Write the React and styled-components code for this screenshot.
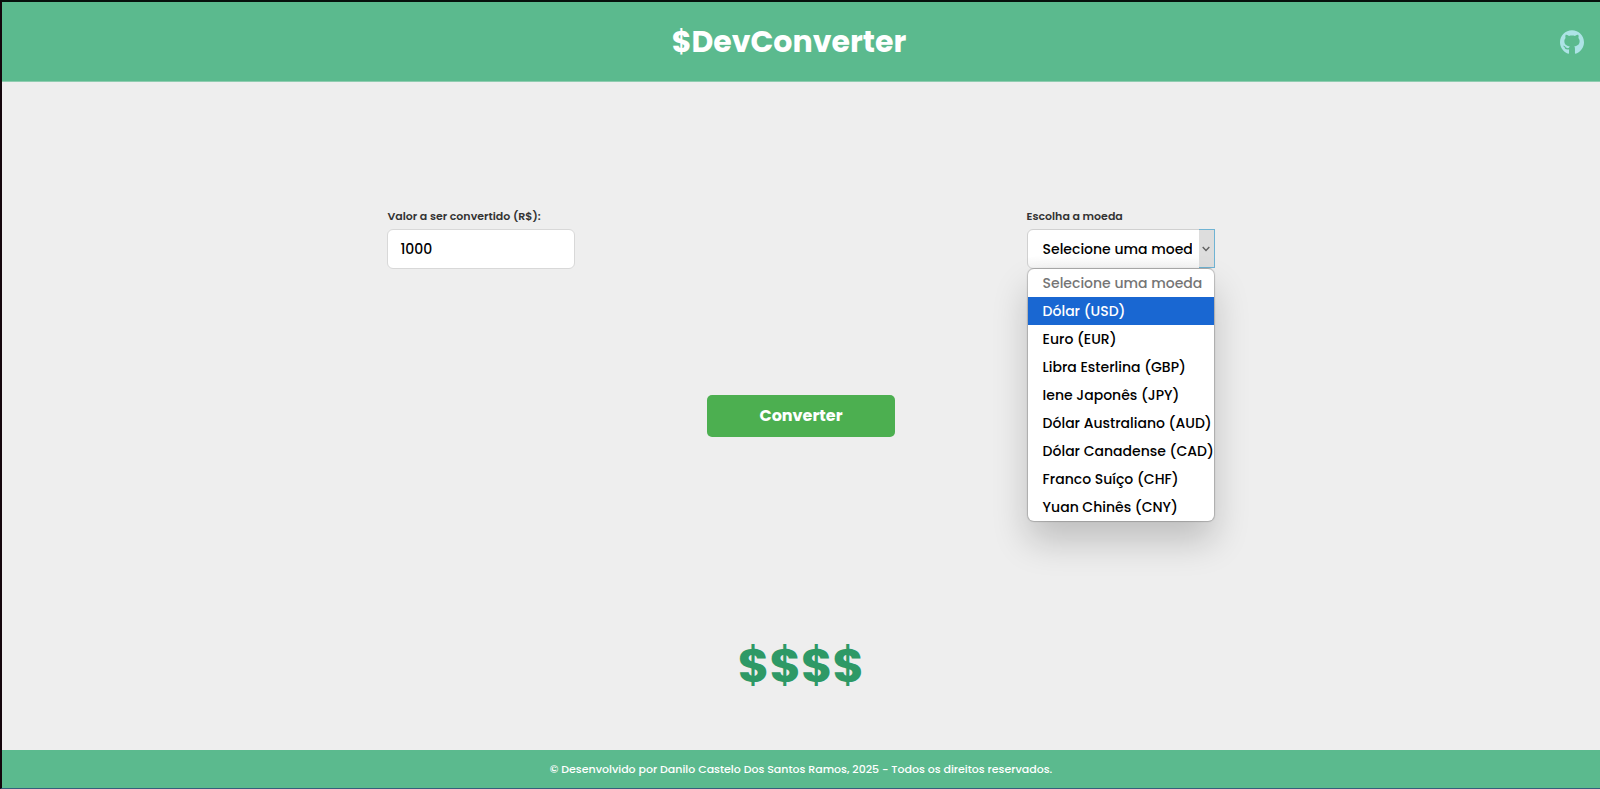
import React, { useState } from "react";
import styled, { createGlobalStyle } from "styled-components";

const GlobalStyle = createGlobalStyle`
  * { box-sizing: border-box; margin: 0; padding: 0; }
  body { background: #eeeeee; font-family: Poppins, Inter, "Open Sans", sans-serif; }
`;

const Page = styled.div`
  min-height: 100vh;
  display: flex;
  flex-direction: column;
  border-top: 2px solid #07110c;
  border-left: 2px solid #14060c;
  border-bottom: 1px solid #35607c;
`;

const Header = styled.header`
  display: flex;
  align-items: center;
  height: 80px;
  padding: 0 16px;
  border-bottom: 1px solid #8fccb0;
  background: #5bba8e;
`;

const Title = styled.h1`
  flex: 1;
  text-align: center;
  color: #fff;
  font-size: 30px;
  line-height: 48px;
  font-weight: 700;
`;

const RepoLink = styled.a`
  display: flex;
  color: #ade3e6;
`;

const Main = styled.main`
  flex: 1;
  display: flex;
  flex-direction: column;
  align-items: center;
`;

const Form = styled.form`
  flex: 1;
  width: 80%;
  display: flex;
  flex-direction: column;
  align-items: center;
  justify-content: space-evenly;
`;

const Fields = styled.div`
  width: 100%;
  display: grid;
  grid-template-columns: 1fr 1fr;
  justify-items: center;
`;

const Field = styled.div`
  width: 188px;
  display: flex;
  flex-direction: column;
  gap: 4px;
`;

const Label = styled.label`
  color: #333;
  font-size: 11px;
  line-height: 18px;
  font-weight: 600;
  white-space: nowrap;
`;

const Input = styled.input`
  width: 100%;
  height: 40px;
  padding: 0 12px;
  border: 1px solid #d8d8d8;
  border-radius: 6px;
  outline: none;
  background: #fff;
  color: #000;
  font: 500 14px Poppins, Inter, sans-serif;
`;

const SelectBox = styled.div`
  position: relative;
  height: 40px;
`;

const Select = styled.select`
  appearance: none;
  width: 100%;
  height: 40px;
  padding: 0 22px 0 15px;
  border: 1px solid #d0d0d0;
  border-radius: 6px;
  outline: none;
  background: linear-gradient(#fff 70%, #f4f4f4);
  color: #000;
  font: 500 14px Poppins, Inter, sans-serif;
`;

const Arrow = styled.span`
  position: absolute;
  top: 0;
  right: 0;
  width: 16px;
  height: 39px;
  display: flex;
  align-items: center;
  justify-content: center;
  border: 1px solid #6fb3d3;
  border-left: 0;
  background: #dddddd;
  color: #606060;
  pointer-events: none;
`;

const Options = styled.ul`
  position: absolute;
  top: 100%;
  left: 1px;
  right: 1px;
  overflow: hidden;
  list-style: none;
  border-radius: 6px;
  background: #fff;
  box-shadow: 0 0 1px 1px rgba(0, 0, 0, 0.2), 0 20px 36px rgba(0, 0, 0, 0.2);
`;

const Option = styled.li`
  height: 28px;
  padding-left: 15px;
  color: ${(p) => (p.$active ? "#fff" : p.$muted ? "#757575" : "#000")};
  background: ${(p) => (p.$active ? "#1967d2" : "transparent")};
  font-size: 14px;
  line-height: 28px;
  font-weight: 500;
  white-space: nowrap;
`;

const Submit = styled.button`
  width: 188px;
  height: 42px;
  border: 0;
  border-radius: 5px;
  background: #4caf50;
  color: #fff;
  font: 700 16px Poppins, Inter, sans-serif;
  cursor: pointer;
`;

const Money = styled.p`
  padding: 68px 0 48px;
  color: #2e9966;
  font-size: 48px;
  line-height: 72px;
  font-weight: 700;
`;

const Footer = styled.footer`
  height: 38px;
  display: flex;
  align-items: center;
  justify-content: center;
  background: #5bba8e;
  color: #fff;
  font-size: 11px;
  line-height: 16px;
  font-weight: 500;
`;

const currencies = [
  ["USD", "Dólar (USD)"],
  ["EUR", "Euro (EUR)"],
  ["GBP", "Libra Esterlina (GBP)"],
  ["JPY", "Iene Japonês (JPY)"],
  ["AUD", "Dólar Australiano (AUD)"],
  ["CAD", "Dólar Canadense (CAD)"],
  ["CHF", "Franco Suíço (CHF)"],
  ["CNY", "Yuan Chinês (CNY)"],
];

export default function App() {
  const [amount, setAmount] = useState("1000");
  const [currency, setCurrency] = useState("");
  const [active, setActive] = useState("USD");
  const [open, setOpen] = useState(true);

  const choose = (code) => {
    setCurrency(code);
    setOpen(false);
  };

  return (
    <>
      <GlobalStyle />
      <Page>
        <Header>
          <Title>$DevConverter</Title>
          <RepoLink href="#github" aria-label="GitHub">
            <svg width="24" height="24" viewBox="0 0 24 24" fill="currentColor">
              <path d="M12 .297c-6.63 0-12 5.373-12 12 0 5.303 3.438 9.8 8.205 11.385.6.113.82-.258.82-.577V19.3c-3.338.724-4.042-1.16-4.042-1.16-.55-1.22-1.35-1.6-1.35-1.6-1.087-.744.084-.729.084-.729 1.205.084 1.838 1.236 1.838 1.236 1.07 1.5 2.809 1.1 3.495.8.108-.776.417-1.305.76-1.605-2.665-.3-5.466-1.332-5.466-5.1 0-1.31.465-2.38 1.235-3.22-.135-.303-.54-1.523.105-3.176 0 0 1.005-.322 3.3 1.23.96-.267 1.98-.399 3-.405 1.02.006 2.04.138 3 .405 2.28-1.552 3.285-1.23 3.285-1.23.645 1.653.24 2.873.12 3.176.765.84 1.23 1.91 1.23 3.22 0 3.78-2.805 4.8-5.475 5.1.42.36.81 1.096.81 2.22v4.64c0 .315.21.69.825.57C20.565 22.092 24 17.592 24 12.297c0-6.627-5.373-12-12-12" />
            </svg>
          </RepoLink>
        </Header>
        <Main>
          <Form onSubmit={(e) => e.preventDefault()}>
            <Fields>
              <Field>
                <Label htmlFor="amount">Valor a ser convertido (R$):</Label>
                <Input id="amount" inputMode="decimal" value={amount} onChange={(e) => setAmount(e.target.value)} />
              </Field>
              <Field>
                <Label htmlFor="currency">Escolha a moeda</Label>
                <SelectBox>
                  <Select id="currency" value={currency} onChange={(e) => choose(e.target.value)}>
                    <option value="" disabled>Selecione uma moeda</option>
                    {currencies.map(([code, name]) => (
                      <option key={code} value={code}>{name}</option>
                    ))}
                  </Select>
                  <Arrow aria-hidden="true">
                    <svg width="8" height="6" viewBox="0 0 8 6" fill="none" stroke="currentColor" strokeWidth="1.4">
                      <path d="M.7 1 4 4.4 7.3 1" />
                    </svg>
                  </Arrow>
                  {open && (
                    <Options role="listbox" aria-label="Escolha a moeda">
                      <Option role="option" aria-disabled="true" $muted>Selecione uma moeda</Option>
                      {currencies.map(([code, name]) => (
                        <Option
                          key={code}
                          role="option"
                          aria-selected={code === active}
                          $active={code === active}
                          onMouseEnter={() => setActive(code)}
                          onClick={() => choose(code)}
                        >
                          {name}
                        </Option>
                      ))}
                    </Options>
                  )}
                </SelectBox>
              </Field>
            </Fields>
            <Submit type="submit">Converter</Submit>
          </Form>
          <Money>$$$$</Money>
        </Main>
        <Footer>
          <p>© Desenvolvido por Danilo Castelo Dos Santos Ramos, 2025 - Todos os direitos reservados.</p>
        </Footer>
      </Page>
    </>
  );
}
